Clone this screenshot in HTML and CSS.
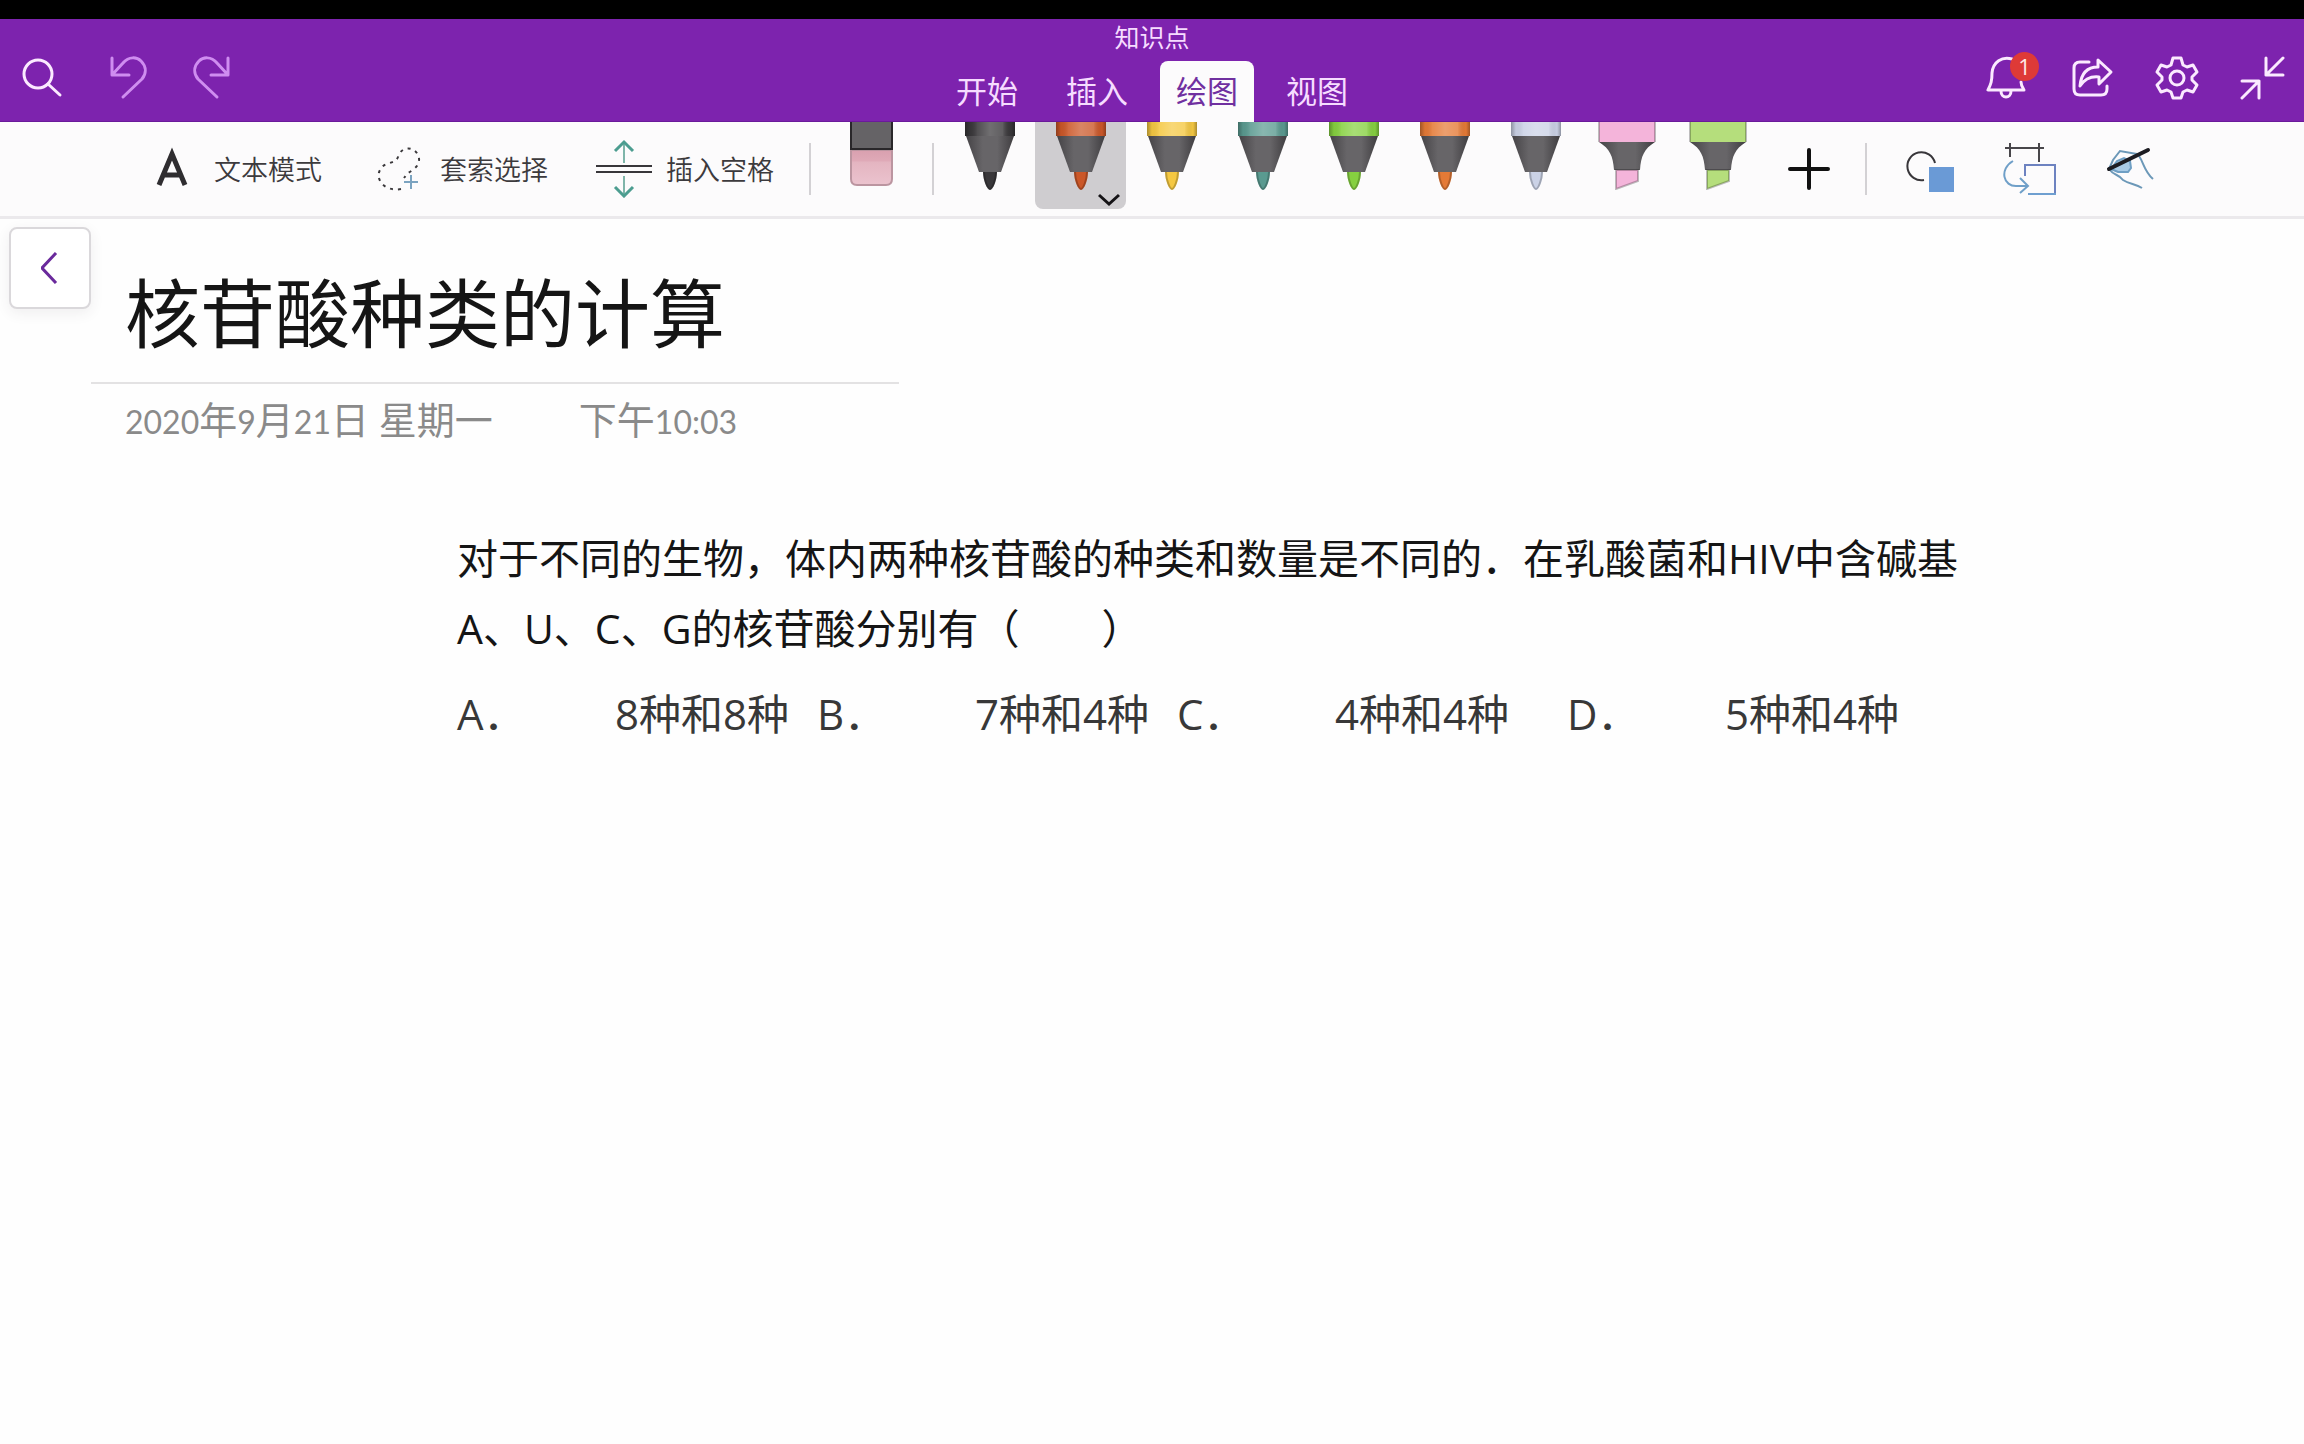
FILE: index.html
```html
<!DOCTYPE html>
<html lang="zh-CN">
<head>
<meta charset="utf-8">
<meta name="viewport" content="width=device-width, initial-scale=1">
<title>知识点</title>
<link rel="stylesheet" href="styles.css">
</head>
<body>
<svg class="defs" aria-hidden="true">
  <defs>
    <linearGradient id="shade">
      <stop offset="0" stop-color="#000" stop-opacity=".3"/>
      <stop offset=".1" stop-color="#000" stop-opacity=".04"/>
      <stop offset=".25" stop-color="#fff" stop-opacity=".12"/>
      <stop offset=".5" stop-color="#fff" stop-opacity=".28"/>
      <stop offset=".75" stop-color="#fff" stop-opacity=".2"/>
      <stop offset=".92" stop-color="#000" stop-opacity=".02"/>
      <stop offset="1" stop-color="#000" stop-opacity=".3"/>
    </linearGradient>
    <linearGradient id="cone">
      <stop offset="0" stop-color="#454346"/>
      <stop offset=".35" stop-color="#676568"/>
      <stop offset=".65" stop-color="#676568"/>
      <stop offset="1" stop-color="#3f3d40"/>
    </linearGradient>
    <linearGradient id="rubber" x2="0" y2="1">
      <stop offset="0" stop-color="#d9a0af"/>
      <stop offset=".3" stop-color="#dfa9b7"/>
      <stop offset=".36" stop-color="#e4b5c1"/>
      <stop offset="1" stop-color="#ebc3ce"/>
    </linearGradient>
    <symbol id="pen" viewBox="0 0 50 68">
      <path d="M0 0H50V14H0Z" fill="currentColor"/>
      <path d="M0 0H50V14H0Z" fill="url(#shade)"/>
      <path d="M1 14H49L36 50H14Z" fill="url(#cone)"/>
      <path d="M18 50H32C32 58 28 68 25 68S18 58 18 50Z" fill="currentColor"/>
      <path d="M19 50C19 58 23 67 25 67S31 58 31 50" fill="none" stroke="#000" stroke-opacity=".22" stroke-width="2"/>
    </symbol>
    <symbol id="marker" viewBox="0 0 58 68">
      <path d="M1 0H57V20H1Z" fill="currentColor"/>
      <path d="M1 0V20M57 0V20" stroke="#000" stroke-opacity=".25" stroke-width="2"/>
      <path d="M1 20H57C46 27 43 34 42 48H16C15 34 12 27 1 20Z" fill="url(#cone)"/>
      <path d="M18 48H40V59L18 67Z" fill="currentColor" stroke="#000" stroke-opacity=".25" stroke-width="2"/>
    </symbol>
  </defs>
</svg>

<div class="status-bar"></div>

<header class="header">
  <div class="actions">
    <button class="action" aria-label="搜索"><svg class="icon" width="44" height="44" viewBox="0 0 44 44"><circle cx="17" cy="18" r="14"/><path d="M27 28L39 39"/></svg></button>
    <button class="action dim" aria-label="撤消"><svg class="icon" width="44" height="44" viewBox="0 0 44 44"><path d="M6 2V19H23M6 19L17 7C23 0 31 1 35 5C41 11 40 18 36 23L17 41"/></svg></button>
    <button class="action dim" aria-label="恢复"><svg class="icon" width="44" height="44" viewBox="0 0 44 44"><path d="M37 2V19H20M37 19L26 7C20 0 12 1 8 5C2 11 3 18 7 23L26 41"/></svg></button>
  </div>
  <div class="center">
    <div class="notebook">知识点</div>
    <nav class="tabs">
      <button class="tab">开始</button>
      <button class="tab">插入</button>
      <button class="tab active">绘图</button>
      <button class="tab">视图</button>
    </nav>
  </div>
  <div class="actions end">
    <button class="action bell" aria-label="通知"><svg class="icon" width="44" height="44" viewBox="0 0 44 44"><path d="M27 3C17 0 8 6 7 17C7 25 6 28 3 34H39C37 31 36 29 36 26M16 35C16 43 26 43 26 35"/></svg><span class="badge">1</span></button>
    <button class="action" aria-label="共享"><svg class="icon" width="44" height="44" viewBox="0 0 44 44"><path d="M19 6H10Q4 6 4 12V33Q4 39 10 39H31Q37 39 37 33V30"/><path d="M28 4L41 16L29 28V21C20 20 14 24 10 30C11 18 17 11 28 11Z"/></svg></button>
    <button class="action" aria-label="设置"><svg class="icon" width="44" height="44" viewBox="0 0 44 44"><path d="M18 2H26L28 9L32 11L38 9L42 16L37 21V24L42 29L38 36L32 34L28 36L26 42H18L16 36L12 34L6 36L2 29L7 24V21L2 16L6 9L12 11L16 9Z"/><circle cx="22" cy="22" r="7"/></svg></button>
    <button class="action" aria-label="退出全屏"><svg class="icon" width="46" height="44" viewBox="0 0 46 44"><path d="M44 2L27 19M27 2V19H44M3 42L20 25M3 25H20V42"/></svg></button>
  </div>
</header>

<div class="toolbar">
  <div class="modes">
    <button class="mode"><svg width="56" height="60" viewBox="0 0 56 60"><path d="M15 47L28 16L41 47M20 37H36" fill="none" stroke="#2f2d30" stroke-width="5"/></svg>文本模式</button>
    <button class="mode"><svg width="56" height="60" viewBox="0 0 56 60"><path d="M31 51C14 54 5 41 10 32C14 23 25 27 28 19C32 6 47 9 49 20C50 28 43 32 38 35L34 40" fill="none" stroke="#3a383b" stroke-width="2" stroke-dasharray="3 5"/><path d="M41 37V51M34 44H48" fill="none" stroke="#7ba3c0" stroke-width="2"/></svg>套索选择</button>
    <button class="mode"><svg width="56" height="60" viewBox="0 0 56 60"><path d="M0 28H56M0 34H56" fill="none" stroke="#38363a" stroke-width="2"/><path d="M28 25V4M28 38V58" fill="none" stroke="#7fb5aa" stroke-width="2"/><path d="M19 13L28 4L37 13M19 49L28 58L37 49" fill="none" stroke="#4c9d90" stroke-width="3"/></svg>插入空格</button>
  </div>
  <i class="divider"></i>
  <button class="slot" aria-label="橡皮擦"><svg width="43" height="64" viewBox="0 0 43 64"><path d="M1 28H42V57Q42 63 36 63H7Q1 63 1 57Z" fill="url(#rubber)" stroke="#bb95a0" stroke-width="2"/><path d="M0 0H43V28H0Z" fill="#656366"/><path d="M1 0V27H42V0" fill="none" stroke="#29272a" stroke-width="2"/></svg></button>
  <i class="divider"></i>
  <div class="pens">
    <button class="slot pen-black" aria-label="黑色笔"><svg width="50" height="68"><use href="#pen"/></svg></button>
    <button class="slot pen-rust selected" aria-label="红棕色笔"><svg width="50" height="68"><use href="#pen"/></svg><svg class="more" width="22" height="14" viewBox="0 0 22 14"><path d="M1 2L11 11L21 2" fill="none" stroke="#151316" stroke-width="3"/></svg></button>
    <button class="slot pen-yellow" aria-label="黄色笔"><svg width="50" height="68"><use href="#pen"/></svg></button>
    <button class="slot pen-teal" aria-label="青色笔"><svg width="50" height="68"><use href="#pen"/></svg></button>
    <button class="slot pen-green" aria-label="绿色笔"><svg width="50" height="68"><use href="#pen"/></svg></button>
    <button class="slot pen-orange" aria-label="橙色笔"><svg width="50" height="68"><use href="#pen"/></svg></button>
    <button class="slot pen-silver" aria-label="银色笔"><svg width="50" height="68"><use href="#pen"/></svg></button>
    <button class="slot marker-pink" aria-label="粉色荧光笔"><svg width="58" height="68"><use href="#marker"/></svg></button>
    <button class="slot marker-lime" aria-label="绿色荧光笔"><svg width="58" height="68"><use href="#marker"/></svg></button>
    <button class="slot middle" aria-label="添加笔"><svg width="42" height="42" viewBox="0 0 42 42"><path d="M21 2V40M2 21H40" fill="none" stroke="#111" stroke-width="4" stroke-linecap="round"/></svg></button>
  </div>
  <i class="divider"></i>
  <div class="shapes">
    <button class="shape" aria-label="形状"><svg width="54" height="60" viewBox="0 0 54 60"><path d="M22 42A14 14 0 1 1 33 25" fill="none" stroke="#38363a" stroke-width="2"/><path d="M27 29H52V54H27Z" fill="#6a9ad6"/></svg></button>
    <button class="shape" aria-label="墨迹转换为形状"><svg width="54" height="62" viewBox="0 0 54 62"><path d="M2 11H41M7 6V20M36 6V25" fill="none" stroke="#48464a" stroke-width="2"/><path d="M10 24C-4 32 0 50 14 49H25M17 41L25 49L17 56" fill="none" stroke="#6f9fc8" stroke-width="2"/><path d="M22 39V28H52V57" fill="none" stroke="#6d82c0" stroke-width="2"/><path d="M25 57H53" stroke="#6f9fd0" stroke-width="2"/></svg></button>
    <button class="shape" aria-label="用手指绘图"><svg width="54" height="60" viewBox="0 0 54 60"><path d="M7 31L13 23L20 20L26 23L27 30L24 34L14 34Z" fill="#a9cbe6" stroke="#6f9fc4" stroke-width="2"/><path d="M5 31L9 22L16 13L33 16M35 18C40 25 40 33 49 41M5 31C10 38 15 36 19 42C25 46 32 46 38 50" fill="none" stroke="#6c98b8" stroke-width="2"/><path d="M5 31L44 12" stroke="#1c1c22" stroke-width="4" stroke-linecap="round"/></svg></button>
  </div>
</div>

<main class="page">
  <button class="back" aria-label="显示导航"><svg width="18" height="32" viewBox="0 0 18 32"><path d="M15 1L1 16L15 31" fill="none" stroke="#6a2a9c" stroke-width="3"/></svg></button>
  <article class="note">
    <div class="heading">
      <h1 class="title">核苷酸种类的计算</h1>
      <p class="date"><time><span class="num">2020</span>年<span class="num">9</span>月<span class="num">21</span>日 星期一</time><time>下午<span class="num">10:03</span></time></p>
    </div>
    <div class="question">
      <p class="stem">对于不同的生物，体内两种核苷酸的种类和数量是不同的．在乳酸菌和HIV中含碱基<br>A、U、C、G的核苷酸分别有（　　）</p>
      <ul class="choices">
        <li class="choice"><span class="letter">A．</span>8种和8种</li>
        <li class="choice"><span class="letter">B．</span>7种和4种</li>
        <li class="choice"><span class="letter">C．</span>4种和4种</li>
        <li class="choice"><span class="letter">D．</span>5种和4种</li>
      </ul>
    </div>
  </article>
</main>
</body>
</html>
```
FILE: styles.css
```css
* {
  box-sizing: border-box;
}

body {
  margin: 0;
  min-height: 100vh;
  background: #fefefe;
  color: #151515;
  font-family: "Open Sans", "Noto Sans CJK SC", sans-serif;
}

button {
  padding: 0;
  border: 0;
  background: none;
  color: inherit;
  font: inherit;
}

svg {
  display: block;
  flex: none;
}

.defs {
  position: absolute;
  width: 0;
  height: 0;
}

.status-bar {
  height: 19px;
  background: #000;
}

/* Header */
.header {
  display: grid;
  grid-template-columns: 1fr auto 1fr;
  height: 103px;
  background: #7d23ae;
  border-bottom: 1px solid #6a1a9a;
  color: #f6dcff;
}

.actions {
  display: flex;
  align-items: center;
  padding-top: 16px;
}

.end {
  justify-content: flex-end;
}

.action {
  display: flex;
  justify-content: center;
  width: 85px;
}

.icon {
  fill: none;
  stroke: #fbeaff;
  stroke-width: 3;
  stroke-linejoin: round;
  stroke-linecap: round;
}

.dim .icon {
  stroke: #cf8df0;
}

.bell {
  position: relative;
}

.badge {
  position: absolute;
  top: -4px;
  right: 10px;
  width: 29px;
  height: 29px;
  border-radius: 50%;
  background: #de3a37;
  color: #ffe9e6;
  font-size: 22px;
  line-height: 29px;
  text-align: center;
}

.center {
  display: flex;
  flex-direction: column;
  justify-content: space-between;
  align-items: center;
}

.notebook {
  font-size: 25px;
  line-height: 36px;
}

.tabs {
  display: flex;
  gap: 16px;
  margin-bottom: -1px;
}

.tab {
  padding: 0 16px;
  height: 61px;
  border-radius: 8px 8px 0 0;
  font-size: 31px;
  line-height: 59px;
}

.active {
  background: #fcfbfc;
  color: #7030a0;
}

/* Drawing toolbar */
.toolbar {
  display: flex;
  height: 97px;
  padding-left: 144px;
  background: #fcfbfc;
  border-bottom: 3px solid #ebe9ec;
}

.modes {
  display: flex;
  gap: 48px;
  margin-right: 35px;
  padding-bottom: 2px;
}

.mode {
  display: flex;
  align-items: center;
  gap: 14px;
  color: #3c3a3d;
  font-size: 27px;
  font-weight: 350;
  white-space: nowrap;
}

.divider {
  flex: none;
  width: 2px;
  height: 52px;
  margin-top: 21px;
  background: #d3d1d4;
}

.slot {
  position: relative;
  display: flex;
  justify-content: center;
  width: 91px;
  height: 87px;
}

.toolbar > .slot {
  margin: 0 15px;
}

.pens {
  display: flex;
  margin: 0 11px 0 10px;
}

.middle {
  height: 94px;
  align-items: center;
}

.selected {
  border-radius: 0 0 8px 8px;
  background: #cfcdd0;
}

.more {
  position: absolute;
  right: 6px;
  bottom: 2px;
}

.pen-black { color: #39373a; }
.pen-rust { color: #cb5728; }
.pen-yellow { color: #f5c842; }
.pen-teal { color: #5a9a90; }
.pen-green { color: #86d040; }
.pen-orange { color: #e57a36; }
.pen-silver { color: #cbd2e6; }
.marker-pink { color: #f4b4da; }
.marker-lime { color: #b5de7c; }

.shapes {
  display: flex;
  margin-left: 11px;
  padding-bottom: 2px;
}

.shape {
  display: flex;
  align-items: center;
  justify-content: center;
  width: 101px;
}

/* Note page */
.page {
  display: flex;
  align-items: flex-start;
  padding: 8px 9px;
}

.back {
  display: flex;
  flex: none;
  align-items: center;
  justify-content: center;
  width: 82px;
  height: 82px;
  border: 2px solid #dad8db;
  border-radius: 8px;
  background: #fff;
  box-shadow: 0 4px 14px rgba(60, 50, 70, 0.08);
}

.note {
  flex: 1;
}

.heading {
  max-width: 808px;
}

.title {
  margin: 0;
  padding: 31px 34px 14px;
  border-bottom: 2px solid #e3e2e3;
  font-size: 75px;
  font-weight: 400;
  line-height: 110px;
}

.date {
  display: flex;
  gap: 86px;
  margin: 0;
  padding-left: 34px;
  color: #8a8a8a;
  font-size: 38px;
  line-height: 70px;
  white-space: nowrap;
}

.num {
  font-family: Lato, "Noto Sans", sans-serif;
  font-size: 32px;
}

.question {
  margin: 66px 0 0 366px;
  font-size: 41px;
}

.stem {
  margin: 0;
  line-height: 70px;
}

.choices {
  display: grid;
  grid-template-columns: 360px 360px 390px auto;
  margin: 16px 0 0;
  padding: 0;
  color: #383838;
  font-size: 42px;
  line-height: 70px;
  list-style: none;
}

.choice {
  display: flex;
  white-space: nowrap;
}

.letter {
  width: 158px;
}
```
